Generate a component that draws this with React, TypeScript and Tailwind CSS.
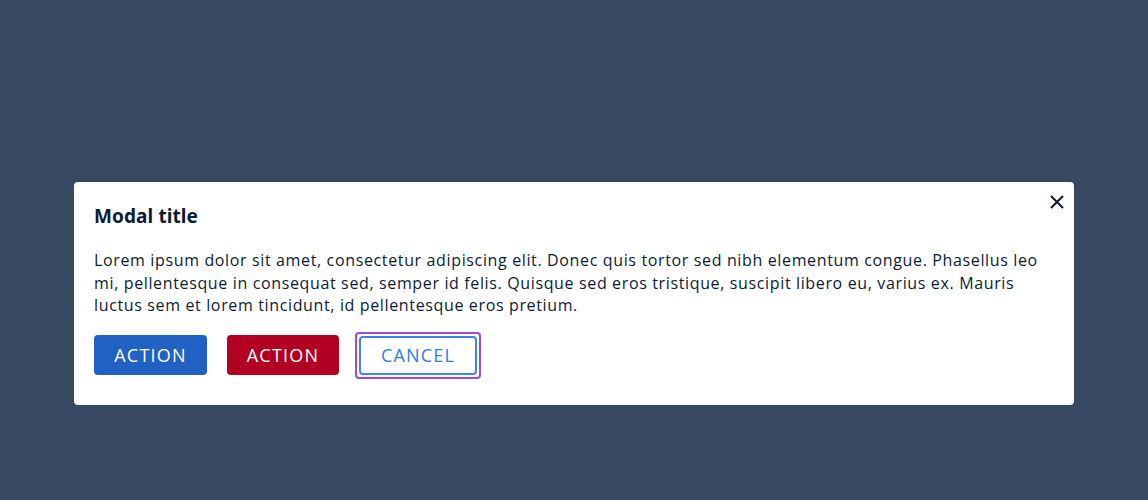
export default function App() {
  return (
    <div className="w-[1148px] h-[500px] bg-[#374862] pt-[182px] pl-[74px] font-['Open_Sans',sans-serif]">
      <div className="relative w-[1000px] bg-white rounded-[4px] px-5 pt-[19px] pb-[26px]">
        <button className="absolute right-[7px] top-[10px] w-[20px] h-[20px] flex items-center justify-center text-[#0b1b36]">
          <svg width="14" height="14" viewBox="0 0 14 14" fill="none" stroke="currentColor" strokeWidth="2">
            <path d="M1 1L13 13M13 1L1 13" />
          </svg>
        </button>
        <h2 className="text-[19px] leading-[30px] font-bold text-[#0b1b36] font-['Noto_Sans',sans-serif] tracking-[0.1px]">Modal title</h2>
        <p className="mt-[18px] text-[16px] leading-[22.5px] text-[#0b1b36] tracking-[0.64px] pr-2">
          Lorem ipsum dolor sit amet, consectetur adipiscing elit. Donec quis tortor sed nibh elementum congue. Phasellus leo mi, pellentesque in consequat sed, semper id felis. Quisque sed eros tristique, suscipit libero eu, varius ex. Mauris luctus sem et lorem tincidunt, id pellentesque eros pretium.
        </p>
        <div className="mt-[15px] flex items-center gap-5">
          <button className="h-[40px] w-[113px] rounded-[4px] bg-[#2261c4] text-white text-[18px] tracking-[1.2px] uppercase">Action</button>
          <button className="h-[40px] w-[112px] rounded-[4px] bg-[#b10021] text-white text-[18px] tracking-[1.2px] uppercase">Action</button>
          <div className="-ml-1 p-[2px] border-2 border-[#a347d6] rounded-[4px]">
            <button className="h-[39px] w-[118px] rounded-[4px] border-2 border-[#3b86ee] bg-white text-[#2d7ce6] text-[18px] tracking-[1.2px] uppercase">Cancel</button>
          </div>
        </div>
      </div>
    </div>
  );
}
